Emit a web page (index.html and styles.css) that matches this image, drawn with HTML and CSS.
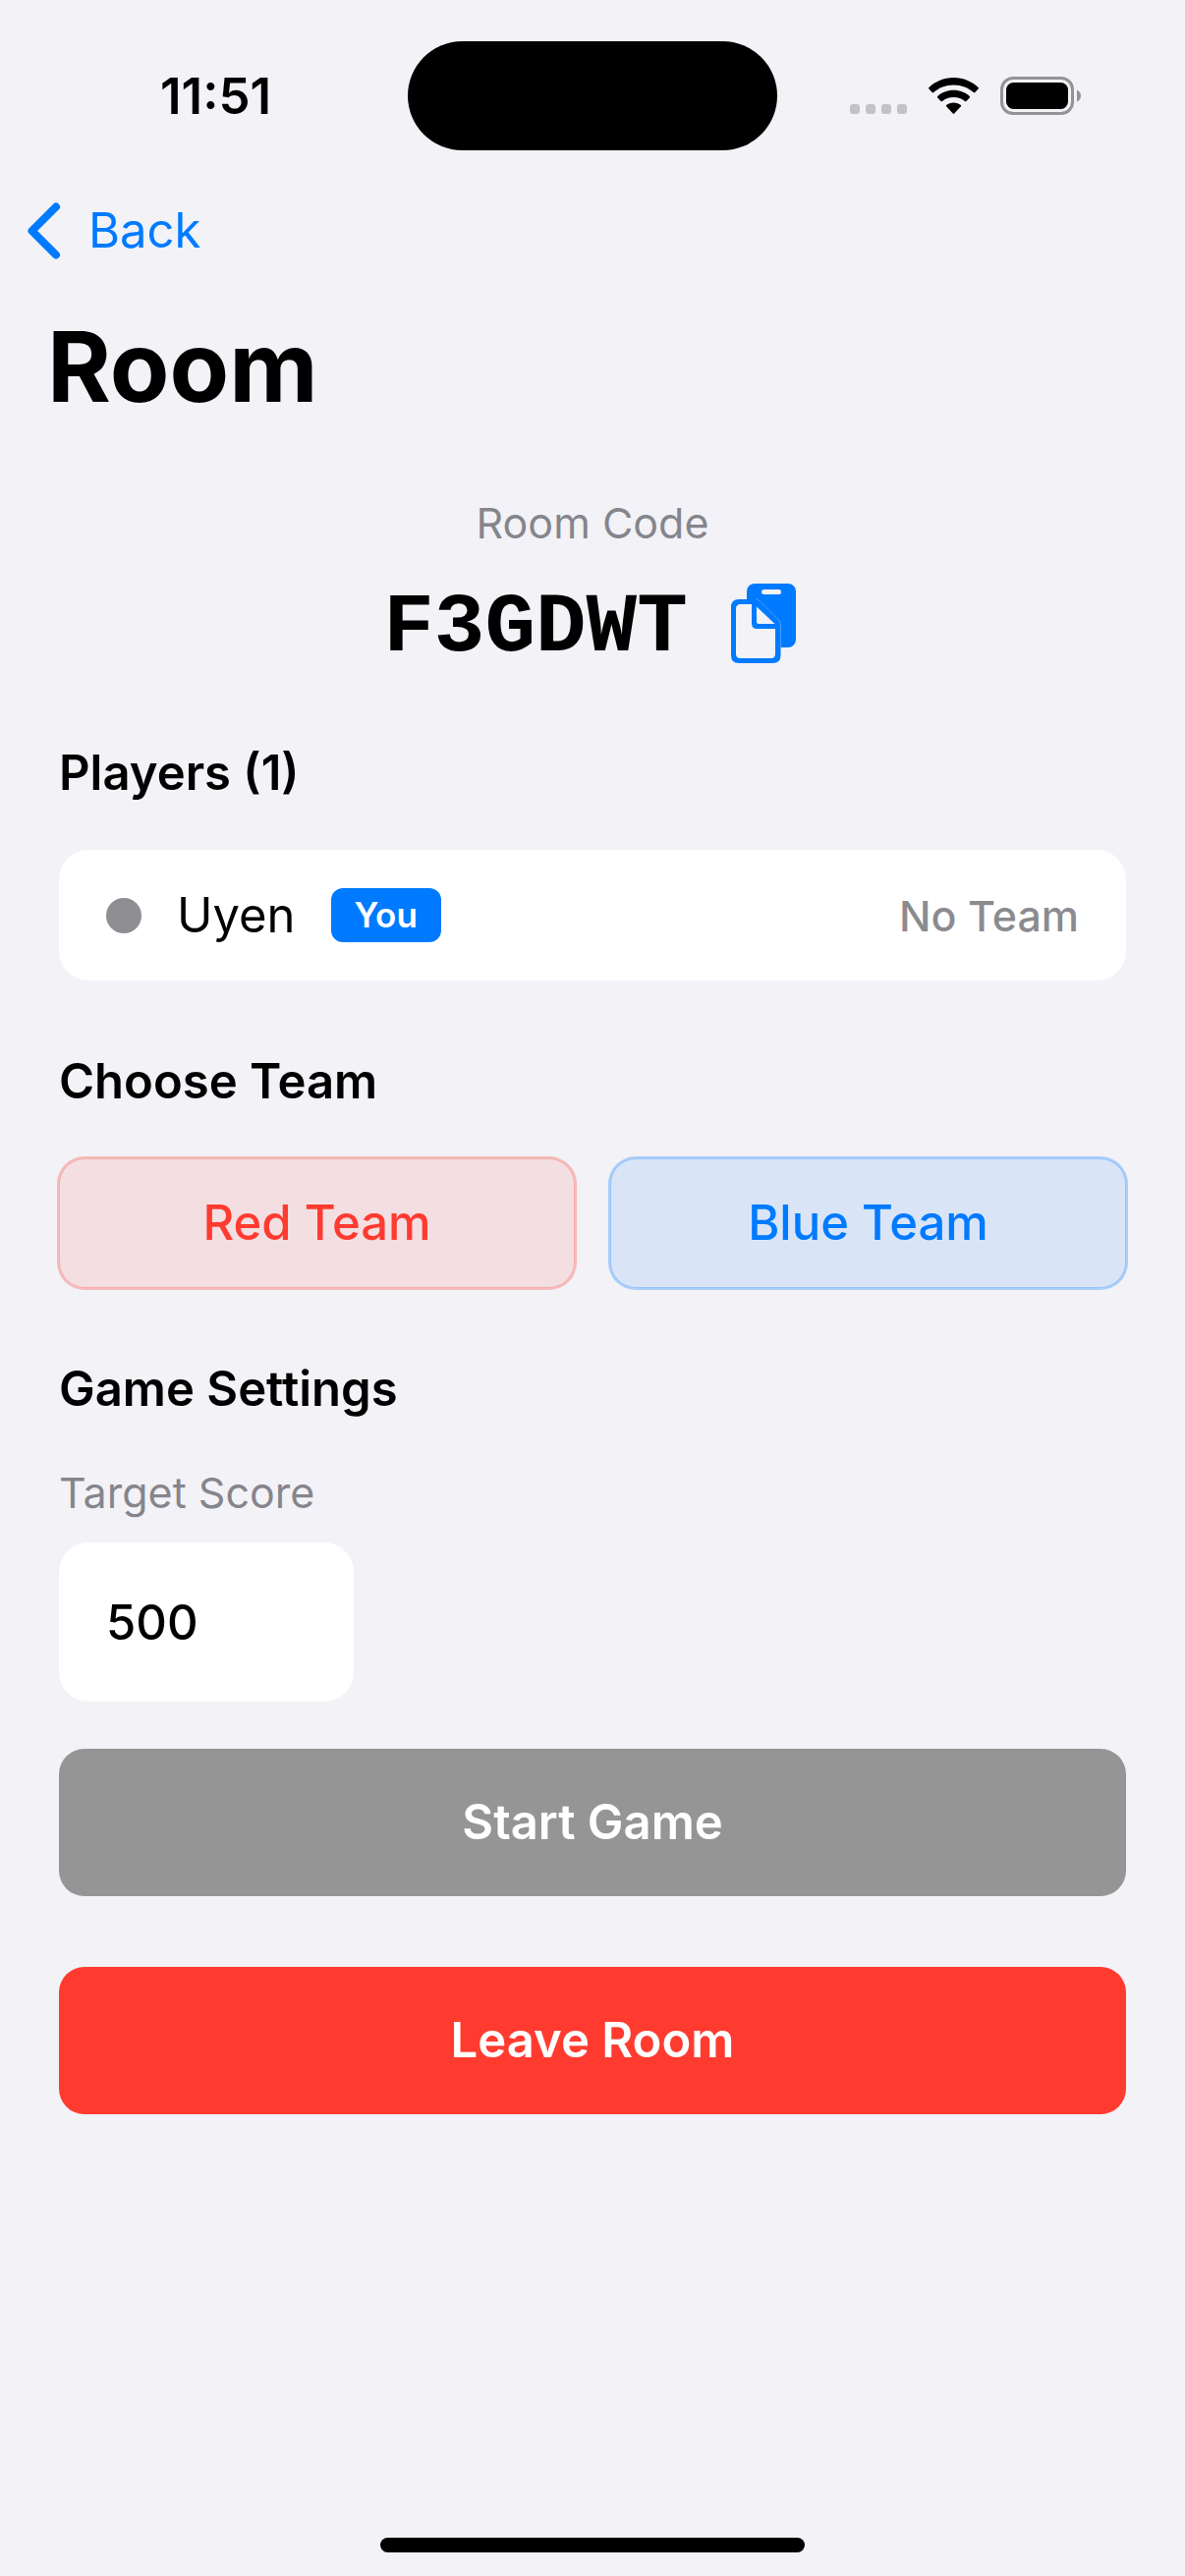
FILE: index.html
```html
<!DOCTYPE html>
<html lang="en">
<head>
  <meta charset="utf-8">
  <meta name="viewport" content="width=device-width, initial-scale=1">
  <title>Room</title>
  <link rel="stylesheet" href="styles.css">
</head>
<body>
  <div class="screen">
    <header class="status-bar">
      <time class="status-time">11:51</time>
      <div class="island"></div>
      <div class="status-icons">
        <svg class="icon-signal" width="58" height="38" viewBox="0 0 58 38" aria-hidden="true">
          <g fill="#c3c3c7">
            <rect x="0" y="27" width="10" height="10" rx="3"/>
            <rect x="16" y="27" width="10" height="10" rx="3"/>
            <rect x="32" y="27" width="10" height="10" rx="3"/>
            <rect x="48" y="27" width="10" height="10" rx="3"/>
          </g>
        </svg>
        <svg class="icon-wifi" width="51" height="38" viewBox="0 0 51 38" aria-hidden="true">
          <path d="M25.5 0C35.500 0 44 3.800 50.600 10.100Q51.200 10.800 50.600 11.500L47.300 15.100Q46.600 15.800 45.900 15.100C40.500 10.200 33.500 7.400 25.500 7.400S10.500 10.200 5.100 15.100Q4.400 15.800 3.700 15.100L.4 11.500Q-.2 10.800.4 10.100C7 3.800 15.500 0 25.500 0Z"/>
          <path d="M25.500 12.800C31.900 12.800 37.500 15.100 41.800 19Q42.500 19.700 41.800 20.400L38.400 24Q37.700 24.700 37 24C33.900 21.500 30 20 25.500 20S17.100 21.500 14 24Q13.300 24.700 12.600 24L9.200 20.400Q8.500 19.700 9.200 19C13.500 15.100 19.100 12.800 25.500 12.800Z"/>
          <path d="M25.500 25.400C28.400 25.400 30.900 26.300 32.900 27.900Q33.500 28.500 32.900 29.200L26.200 36.600Q25.500 37.300 24.800 36.600L18.100 29.200Q17.500 28.500 18.100 27.900C20.100 26.300 22.600 25.400 25.500 25.400Z"/>
        </svg>
        <svg class="icon-battery" width="82" height="40" viewBox="0 0 82 40" aria-hidden="true">
          <rect x="1.500" y="1.500" width="72" height="36" rx="11.500" fill="none" stroke="#949497" stroke-width="3"/>
          <rect x="6" y="6" width="63" height="27" rx="7.500"/>
          <path d="M78 13.500Q82 15.500 82 19.500T78 25.500Z" fill="#949497"/>
        </svg>
      </div>
    </header>

    <nav class="nav-bar">
      <a class="back" href="#">
        <svg width="34" height="58" viewBox="0 0 34 58" aria-hidden="true">
          <path d="M29 4.500L4.500 29L29 53.500" fill="none" stroke="currentColor" stroke-width="8" stroke-linecap="round" stroke-linejoin="round"/>
        </svg>
        <span>Back</span>
      </a>
    </nav>

    <h1 class="title">Room</h1>

    <main class="content">
      <section class="room-code">
        <p class="caption">Room Code</p>
        <div class="code-row">
          <span class="code">F3GDWT</span>
          <button class="copy" type="button" aria-label="Copy room code">
            <svg width="66" height="81" viewBox="0 0 66 81" aria-hidden="true">
              <rect x="16" y="0" width="50" height="65" rx="8" fill="#007aff"/>
              <rect x="31" y="6" width="20" height="5" rx="2.500" fill="#f2f2f7"/>
              <path d="M0 24Q0 16 8 16H25.500L50.500 41V73Q50.500 81 42.500 81H8Q0 81 0 73Z" fill="#007aff"/>
              <path d="M25.500 16Q28 16.500 30 18.500L48 36.500Q50.300 39 50.500 42V65" fill="none" stroke="#8cc1fb" stroke-width=".5"/>
              <path d="M5 25.500Q5 21 9.500 21H21V40.500Q21 46 26.500 46H45V71.500Q45 76 40.500 76H9.500Q5 76 5 71.500Z" fill="#f2f2f7"/>
              <path d="M26 23.500L44.500 41H28Q26 41 26 39Z" fill="#f2f2f7"/>
            </svg>
          </button>
        </div>
      </section>

      <section class="group">
        <h2 class="heading">Players (1)</h2>
        <ul class="players">
          <li class="player">
            <span class="dot"></span>
            <span class="name">Uyen</span>
            <span class="badge">You</span>
            <span class="team">No Team</span>
          </li>
        </ul>
      </section>

      <section class="group">
        <h2 class="heading">Choose Team</h2>
        <div class="teams">
          <button class="team-button red" type="button">Red Team</button>
          <button class="team-button blue" type="button">Blue Team</button>
        </div>
      </section>

      <section class="group">
        <h2 class="heading">Game Settings</h2>
        <div class="field">
          <label class="caption" for="target-score">Target Score</label>
          <input class="score" id="target-score" type="text" inputmode="numeric" value="500">
        </div>
      </section>

      <div class="actions">
        <button class="action start" type="button" disabled>Start Game</button>
        <button class="action leave" type="button">Leave Room</button>
      </div>
    </main>

    <div class="home-indicator"></div>
  </div>
</body>
</html>
```

FILE: styles.css
```css
:root {
  --bg: #f2f2f7;
  --blue: #007aff;
  --red: #ff3b30;
  --secondary: rgba(60, 60, 67, 0.6);
  --text: 49px;
  --text-small: 43px;
}

* {
  box-sizing: border-box;
}

body,
h1,
h2,
p,
ul {
  margin: 0;
  padding: 0;
}

body {
  background: var(--bg);
  color: #000;
  font-family: Inter, "Liberation Sans", sans-serif;
  font-size: var(--text);
  line-height: 60px;
}

button,
input {
  border: 0;
  font: inherit;
  color: inherit;
}

svg {
  display: block;
}

.screen {
  display: flex;
  flex-direction: column;
  min-height: 100vh;
}

/* Status bar */

.status-bar {
  display: grid;
  grid-template-columns: 1fr 376px 1fr;
  align-items: center;
  padding-top: 42px;
}

.status-time {
  padding-left: 163px;
  font-size: 51px;
  font-weight: 600;
}

.island {
  height: 111px;
  border-radius: 56px;
  background: #000;
}

.status-icons {
  display: flex;
  justify-content: flex-end;
  align-items: center;
  gap: 22px;
  padding-right: 106px;
}

/* Navigation */

.nav-bar {
  display: flex;
  align-items: center;
  height: 132px;
  margin-top: 16px;
  padding: 0 28px;
}

.back {
  display: flex;
  align-items: center;
  gap: 28px;
  color: var(--blue);
  text-decoration: none;
}

.title {
  margin-top: 11px;
  padding: 0 48px;
  font-size: 99px;
  font-weight: 700;
  line-height: 122px;
}

/* Content */

.content {
  display: flex;
  flex-direction: column;
  gap: 73px;
  padding: 71px 60px 48px;
}

.caption {
  color: var(--secondary);
  font-size: var(--text-small);
  line-height: 54px;
}

.room-code {
  display: flex;
  flex-direction: column;
  align-items: center;
  gap: 25px;
}

.code-row {
  display: flex;
  align-items: center;
  gap: 44px;
  height: 100px;
  padding-right: 6px;
}

.code {
  padding-top: 10px;
  font-family: "Liberation Mono", monospace;
  font-size: 86px;
  font-weight: 700;
  line-height: 100px;
}

.copy {
  padding: 0;
  background: none;
}

.group {
  display: flex;
  flex-direction: column;
  gap: 48px;
}

.heading {
  font-size: var(--text);
  font-weight: 600;
}

.players {
  list-style: none;
}

.player {
  display: flex;
  align-items: center;
  gap: 36px;
  height: 133px;
  padding: 0 48px;
  border-radius: 30px;
  background: #fff;
}

.dot {
  width: 36px;
  height: 36px;
  border-radius: 50%;
  background: #8e8e93;
}

.badge {
  padding: 0 24px;
  border-radius: 12px;
  background: var(--blue);
  color: #fff;
  font-size: 35px;
  font-weight: 600;
  line-height: 55px;
}

.team {
  margin-left: auto;
  color: var(--secondary);
  font-size: var(--text-small);
  font-weight: 500;
}

.teams {
  display: grid;
  grid-template-columns: 1fr 1fr;
  gap: 36px;
}

.team-button {
  height: 132px;
  border-radius: 26px;
  font-weight: 500;
}

.red {
  background: rgba(255, 59, 48, 0.1);
  box-shadow: 0 0 0 2px rgba(255, 59, 48, 0.3), inset 0 0 0 1px rgba(255, 59, 48, 0.3);
  color: var(--red);
}

.blue {
  background: rgba(0, 122, 255, 0.1);
  box-shadow: 0 0 0 2px rgba(0, 122, 255, 0.3), inset 0 0 0 1px rgba(0, 122, 255, 0.3);
  color: var(--blue);
}

.field {
  display: flex;
  flex-direction: column;
  align-items: flex-start;
  gap: 24px;
}

.score {
  width: 300px;
  height: 162px;
  padding: 0 48px;
  border-radius: 30px;
  background: #fff;
  font-weight: 500;
}

.actions {
  display: flex;
  flex-direction: column;
  gap: 72px;
  margin-top: -25px;
}

.action {
  height: 150px;
  border-radius: 26px;
  color: #fff;
  font-weight: 600;
}

.start {
  background: #959595;
}

.leave {
  background: var(--red);
}

.home-indicator {
  width: 432px;
  height: 15px;
  margin: auto auto 24px;
  border-radius: 8px;
  background: #000;
}
```
